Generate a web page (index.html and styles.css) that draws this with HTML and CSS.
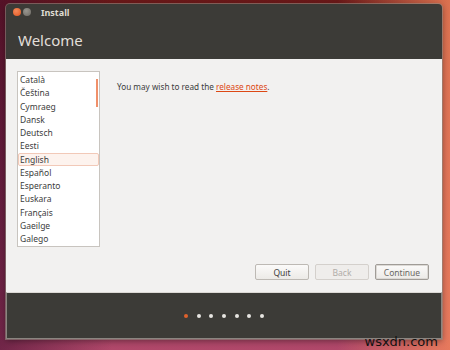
FILE: index.html
```html
<!DOCTYPE html>
<html lang="en">
<head>
    <meta charset="UTF-8">
    <title>Install</title>
    <link rel="stylesheet" href="styles.css">
</head>
<body>
    <div class="window">
        <div class="titlebar">
            <span class="btn-close"></span>
            <span class="btn-min"></span>
            <span class="title">Install</span>
        </div>
        <div class="header">Welcome</div>

        <div class="content">
            <div class="main">
                <div class="lang-list">
                    <div class="item">Català</div>
                    <div class="item">Čeština</div>
                    <div class="item">Cymraeg</div>
                    <div class="item">Dansk</div>
                    <div class="item">Deutsch</div>
                    <div class="item">Eesti</div>
                    <div class="item selected">English</div>
                    <div class="item">Español</div>
                    <div class="item">Esperanto</div>
                    <div class="item">Euskara</div>
                    <div class="item">Français</div>
                    <div class="item">Gaeilge</div>
                    <div class="item">Galego</div>
                    <span class="scrollbar"></span>
                </div>
                <p class="notes">You may wish to read the <a href="#">release notes</a>.</p>
            </div>
            <div class="buttons">
                <button class="btn">Quit</button>
                <button class="btn disabled">Back</button>
                <button class="btn default">Continue</button>
            </div>
        </div>

        <div class="footer">
            <span class="dot active"></span>
            <span class="dot"></span>
            <span class="dot"></span>
            <span class="dot"></span>
            <span class="dot"></span>
            <span class="dot"></span>
            <span class="dot"></span>
        </div>
    </div>
    <div class="watermark">wsxdn.com</div>
</body>
</html>
```

FILE: styles.css
```css
html, body {
    margin: 0;
    height: 100%;
}

body {
    position: relative;
    width: 450px;
    height: 350px;
    overflow: hidden;
    font-family: "Noto Sans", "DejaVu Sans", sans-serif;
    background:
        linear-gradient(90deg, rgba(70, 15, 50, 0.6) 0%, rgba(70, 15, 50, 0) 25%, rgba(240, 120, 80, 0) 75%, rgba(240, 130, 90, 0.85) 100%),
        linear-gradient(180deg, #6a1818 0%, #862a44 40%, #b0486a 100%);
}

.window {
    position: absolute;
    left: 6px;
    top: 4px;
    width: 436px;
    height: 335px;
    display: flex;
    flex-direction: column;
    background-color: #3c3b37;
    border-radius: 4px 4px 0 0;
    box-shadow: 0 0 0 1px rgba(150, 140, 130, 0.6), 0 2px 6px rgba(0, 0, 0, 0.4);
}

.titlebar {
    height: 16px;
    display: flex;
    align-items: center;
    padding-left: 7px;
}

.btn-close,
.btn-min {
    width: 8px;
    height: 8px;
    border-radius: 50%;
    margin-right: 2px;
}

.btn-close {
    background: radial-gradient(circle at 40% 35%, #f58a5a, #e0541f);
}

.btn-min {
    background: radial-gradient(circle at 40% 35%, #99968f, #6b6862);
}

.title {
    margin-left: 8px;
    font-size: 9px;
    font-weight: bold;
    color: #dfdbd2;
}

.header {
    height: 39px;
    padding-left: 12px;
    font-size: 15px;
    color: #e2dfd9;
    line-height: 40px;
}

.content {
    height: 233px;
    background-color: #f2f1f0;
    display: flex;
    flex-direction: column;
}

.main {
    display: flex;
    padding: 12px 0 0 11px;
}

.lang-list {
    position: relative;
    width: 81px;
    height: 173px;
    background-color: #ffffff;
    border: 1px solid #c8c4bf;
    padding-top: 1px;
    box-sizing: content-box;
}

.item {
    height: 13.25px;
    line-height: 13px;
    padding-left: 2px;
    font-size: 8.5px;
    color: #3c3c3c;
}

.item.selected {
    background-color: #fdf3ee;
    border: 1px solid #f2c9b8;
    border-radius: 2px;
    height: 11.25px;
    line-height: 11px;
    padding-left: 1px;
}

.scrollbar {
    position: absolute;
    right: 1px;
    top: 7px;
    width: 2px;
    height: 28px;
    background-color: #f0906a;
}

.notes {
    margin: 10px 0 0 17px;
    font-size: 8.2px;
    color: #3c3c3c;
}

.notes a {
    color: #dd4814;
}

.buttons {
    display: flex;
    justify-content: flex-end;
    gap: 6px;
    margin-top: auto;
    margin-bottom: 12px;
    padding-right: 13px;
}

.btn {
    width: 54px;
    height: 16px;
    padding: 0;
    font-family: inherit;
    font-size: 8.5px;
    color: #3c3c3c;
    background: linear-gradient(#fbfaf9, #eceae7);
    border: 1px solid #bdb9b4;
    border-radius: 2px;
}

.btn.disabled {
    color: #b0aca8;
    background: #efedeb;
    border-color: #d4d0cc;
}

.btn.default {
    color: #6a6864;
    border-color: #a09c97;
    box-shadow: inset 0 0 0 1px #dcd9d5;
}

.footer {
    flex: 1;
    display: flex;
    justify-content: center;
    align-items: center;
    gap: 8.7px;
    border: 1px solid #8a8580;
    border-top: 1px solid #dcd9d5;
}

.dot {
    width: 4px;
    height: 4px;
    border-radius: 50%;
    background-color: #e8e6e2;
}

.dot.active {
    background-color: #e0612c;
}

.watermark {
    position: absolute;
    right: 12px;
    bottom: 1px;
    font-family: "DejaVu Sans", sans-serif;
    font-size: 13px;
    color: #111;
}
```
